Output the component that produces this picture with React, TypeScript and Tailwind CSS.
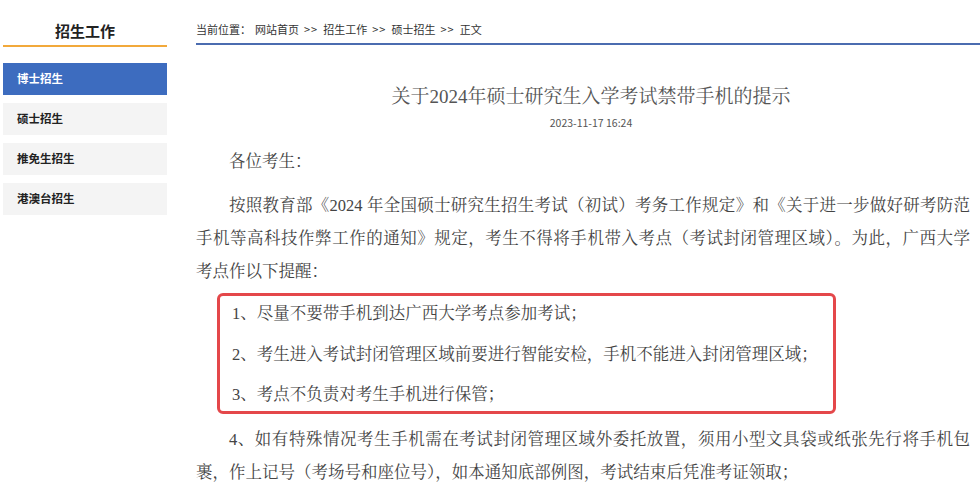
const sideMenu = [
  { label: '博士招生', active: true },
  { label: '硕士招生', active: false },
  { label: '推免生招生', active: false },
  { label: '港澳台招生', active: false },
]

const crumbs = ['网站首页', '招生工作', '硕士招生', '正文']

const tips = [
  '1、尽量不要带手机到达广西大学考点参加考试；',
  '2、考生进入考试封闭管理区域前要进行智能安检，手机不能进入封闭管理区域；',
  '3、考点不负责对考生手机进行保管；',
]

const sans = "font-['Noto_Sans_CJK_SC','Noto_Sans',sans-serif]"

// a line that is not the last of its paragraph is stretched to full width
function Line({ text, indent = false, full = false }: { text: string; indent?: boolean; full?: boolean }) {
  return (
    <div
      className={`${indent ? 'indent-[2em]' : ''} ${full ? 'text-justify [text-align-last:justify]' : ''}`}
    >
      {text}
    </div>
  )
}

export default function App() {
  return (
    <div className="flex w-[980px] h-[500px] overflow-hidden bg-white">
      {/* Sidebar */}
      <aside className={`ml-[3px] w-[164px] shrink-0 ${sans}`}>
        <div className="pt-[19px] pb-[2px] border-b-[2px] border-[#f2a93b] text-center">
          <h2 className="text-[15px] leading-[24px] font-bold text-[#222]">招生工作</h2>
        </div>
        <ul className="mt-[16px] flex flex-col gap-[8px]">
          {sideMenu.map(item => (
            <li
              key={item.label}
              className={`h-[32px] flex items-center pl-[14px] text-[11.5px] font-bold ${
                item.active ? 'bg-[#3d6cbf] text-white' : 'bg-[#f4f4f4] text-[#222]'
              }`}
            >
              {item.label}
            </li>
          ))}
        </ul>
      </aside>

      {/* Main */}
      <main className="ml-[29px] flex-1 min-w-0">
        <div className={`pt-[19px] pb-[4px] border-b-[2px] border-[#4b6cb0] text-[11px] leading-[20px] text-[#333] ${sans}`}>
          <span>当前位置：</span>
          <span className="ml-[4px]">
            {crumbs.map((c, i) => (
              <span key={c}>
                {i > 0 && <span className="mx-[5px] tracking-[1px]">&gt;&gt;</span>}
                {c}
              </span>
            ))}
          </span>
        </div>

        <h1 className="mt-[37px] pl-[6px] text-center text-[19px] leading-[30px] text-[#555] font-normal font-['Liberation_Serif','Noto_Serif_CJK_SC','Noto_Sans_CJK_SC',serif]">
          关于2024年硕士研究生入学考试禁带手机的提示
        </h1>
        <div className={`mt-[2px] pl-[6px] text-center text-[10.5px] leading-[17px] text-[#555] ${sans}`}>
          2023-11-17 16:24
        </div>

        <article className="mt-[13.5px] w-[774px] text-[16.5px] leading-[33px] text-[#444] font-['Liberation_Serif','Noto_Serif_CJK_SC','Noto_Sans_CJK_SC',serif]">
          <Line text="各位考生：" indent />

          <div className="mt-[11px]">
            <Line text="按照教育部《2024 年全国硕士研究生招生考试（初试）考务工作规定》和《关于进一步做好研考防范" indent full />
            <Line text="手机等高科技作弊工作的通知》规定，考生不得将手机带入考点（考试封闭管理区域）。为此，广西大学" full />
            <Line text="考点作以下提醒：" />
          </div>

          <div className="mt-[5.5px] ml-[21px] w-[619px] pt-[1px] pl-[12px] border-[3px] border-[#e4474a] rounded-[6px] flex flex-col gap-[7.5px]">
            {tips.map(t => (
              <div key={t}>{t}</div>
            ))}
          </div>

          <div className="mt-[8.5px]">
            <Line text="4、如有特殊情况考生手机需在考试封闭管理区域外委托放置，须用小型文具袋或纸张先行将手机包" indent full />
            <Line text="裹，作上记号（考场号和座位号），如本通知底部例图，考试结束后凭准考证领取；" />
          </div>
        </article>
      </main>
    </div>
  )
}
